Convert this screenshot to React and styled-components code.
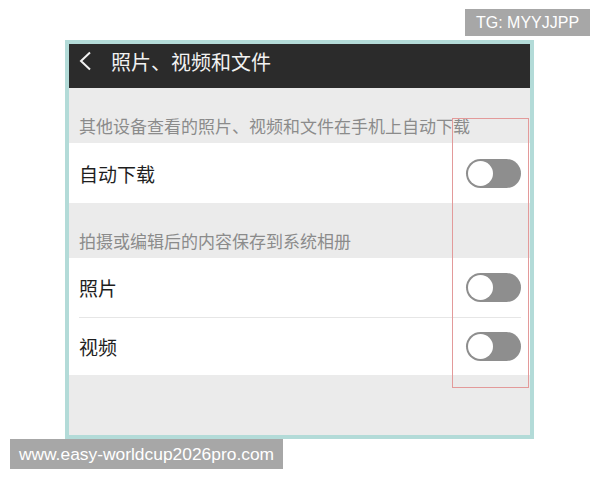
import styled, { createGlobalStyle } from "styled-components";

const GlobalStyle = createGlobalStyle`
  html, body {
    margin: 0;
    padding: 0;
    background: #ffffff;
  }
  * { box-sizing: border-box; }
`;

const Page = styled.div`
  position: relative;
  width: 600px;
  height: 480px;
  padding: 40px 0 0 65px;
  font-family: "Noto Sans CJK SC", "Noto Sans", sans-serif;
`;

const Frame = styled.div`
  width: 469px;
  height: 399px;
  border: 4px solid #b3dbd8;
  background: #ebebeb;
  display: flex;
  flex-direction: column;
`;

const TopBar = styled.div`
  height: 44px;
  background: #2b2b2b;
  display: flex;
  align-items: center;
  padding: 0 0 10px 9px;
  gap: 19px;
  color: #f2f2f2;
  font-size: 20px;
`;

const BackIcon = styled.svg`
  width: 14px;
  height: 20px;
  flex-shrink: 0;
`;

const SectionTitle = styled.div`
  height: ${(p) => p.$h}px;
  display: flex;
  align-items: flex-end;
  padding: 0 0 5px 10px;
  font-size: 17px;
  line-height: 25px;
  color: #8b8b8b;
  white-space: nowrap;
`;

const Group = styled.div`
  background: #ffffff;
  display: flex;
  flex-direction: column;
`;

const Row = styled.div`
  height: ${(p) => p.$h}px;
  margin: 0 9px 0 10px;
  display: flex;
  align-items: center;
  justify-content: space-between;
  border-top: ${(p) => (p.$divider ? "1px solid #e6e6e6" : "none")};
  font-size: 19px;
  color: #1e1e1e;
`;

const Toggle = styled.div`
  width: 55px;
  height: 29px;
  border-radius: 15px;
  background: #8e8e8e;
  padding: 2px;
  display: flex;
  align-items: center;
`;

const Knob = styled.div`
  width: 25px;
  height: 25px;
  border-radius: 50%;
  background: #ffffff;
`;

const Highlight = styled.div`
  position: absolute;
  left: 452px;
  top: 118px;
  width: 77px;
  height: 270px;
  border: 1px solid #e39a9a;
  pointer-events: none;
`;

const Watermark = styled.div`
  position: absolute;
  left: ${(p) => p.$x}px;
  top: ${(p) => p.$y}px;
  width: ${(p) => p.$w}px;
  height: ${(p) => p.$hgt}px;
  background: #a7a7a7;
  color: #ffffff;
  font-family: "Liberation Sans", Arial, sans-serif;
  font-size: ${(p) => p.$fs}px;
  display: flex;
  align-items: center;
  justify-content: center;
`;

const Switch = () => (
  <Toggle>
    <Knob />
  </Toggle>
);

export default function App() {
  return (
    <>
      <GlobalStyle />
      <Page>
        <Frame>
          <TopBar>
            <BackIcon viewBox="0 0 14 20">
              <path d="M12 1.5 L3 10 L12 18.5" fill="none" stroke="#f2f2f2" strokeWidth="2" />
            </BackIcon>
            <span>照片、视频和文件</span>
          </TopBar>
          <SectionTitle $h={55}>其他设备查看的照片、视频和文件在手机上自动下载</SectionTitle>
          <Group>
            <Row $h={60}>
              <span>自动下载</span>
              <Switch />
            </Row>
          </Group>
          <SectionTitle $h={55}>拍摄或编辑后的内容保存到系统相册</SectionTitle>
          <Group>
            <Row $h={59}>
              <span>照片</span>
              <Switch />
            </Row>
            <Row $h={58} $divider>
              <span>视频</span>
              <Switch />
            </Row>
          </Group>
        </Frame>
        <Highlight />
        <Watermark $x={465} $y={9} $w={125} $hgt={27} $fs={16}>TG: MYYJJPP</Watermark>
        <Watermark $x={10} $y={439} $w={273} $hgt={30} $fs={17.4}>www.easy-worldcup2026pro.com</Watermark>
      </Page>
    </>
  );
}
